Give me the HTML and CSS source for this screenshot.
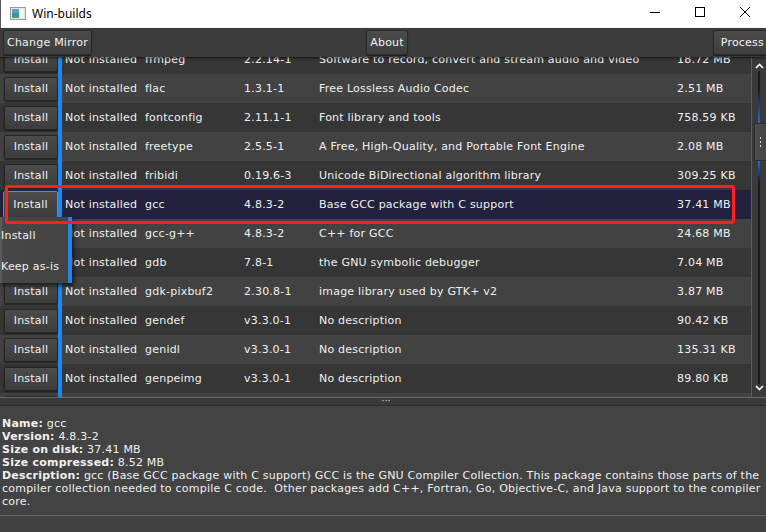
FILE: index.html
```html
<!DOCTYPE html>
<html>
<head>
<meta charset="utf-8">
<link rel="stylesheet" href="styles.css">
</head>
<body>
<div class="window">
  <header class="titlebar">
    <svg class="appicon" width="16" height="13" viewBox="0 0 16 13">
      <rect x="0.5" y="0.5" width="15" height="12" fill="#e8e8e8" stroke="#9a9a9a"/>
      <rect x="2" y="2" width="7" height="9" fill="#3f9a80"/>
      <rect x="2" y="2" width="7" height="4" fill="#5aa0c8"/>
      <rect x="10" y="2" width="4" height="9" fill="#f4f4f4"/>
    </svg>
    <span class="title">Win-builds</span>
    <div class="controls">
      <svg width="12" height="12" viewBox="0 0 12 12"><path d="M1 6.5h10" stroke="#000" stroke-width="1"/></svg>
      <svg width="12" height="12" viewBox="0 0 12 12"><rect x="1.5" y="1.5" width="9" height="9" fill="none" stroke="#000"/></svg>
      <svg width="12" height="12" viewBox="0 0 12 12"><path d="M1 1l10 10M11 1L1 11" stroke="#000" stroke-width="1"/></svg>
    </div>
  </header>
  <div class="app">
    <div class="toolbar">
      <button class="tbtn left">Change Mirror</button>
      <button class="tbtn mid">About</button>
      <button class="tbtn right">Process</button>
    </div>
    <div class="table-area">
      <div class="rows">
        <div class="row dark"><div class="cell-btn"><span class="ibtn">Install</span></div><div class="bar"></div><div class="c">Not installed</div><div class="c">ffmpeg</div><div class="c">2.2.14-1</div><div class="c">Software to record, convert and stream audio and video</div><div class="c">18.72 MB</div></div>
        <div class="row light"><div class="cell-btn"><span class="ibtn">Install</span></div><div class="bar"></div><div class="c">Not installed</div><div class="c">flac</div><div class="c">1.3.1-1</div><div class="c">Free Lossless Audio Codec</div><div class="c">2.51 MB</div></div>
        <div class="row dark"><div class="cell-btn"><span class="ibtn">Install</span></div><div class="bar"></div><div class="c">Not installed</div><div class="c">fontconfig</div><div class="c">2.11.1-1</div><div class="c">Font library and tools</div><div class="c">758.59 KB</div></div>
        <div class="row light"><div class="cell-btn"><span class="ibtn">Install</span></div><div class="bar"></div><div class="c">Not installed</div><div class="c">freetype</div><div class="c">2.5.5-1</div><div class="c">A Free, High-Quality, and Portable Font Engine</div><div class="c">2.08 MB</div></div>
        <div class="row dark"><div class="cell-btn"><span class="ibtn">Install</span></div><div class="bar"></div><div class="c">Not installed</div><div class="c">fribidi</div><div class="c">0.19.6-3</div><div class="c">Unicode BiDirectional algorithm library</div><div class="c">309.25 KB</div></div>
        <div class="row selected"><div class="cell-btn"><span class="ibtn focused">Install</span></div><div class="bar"></div><div class="c">Not installed</div><div class="c">gcc</div><div class="c">4.8.3-2</div><div class="c">Base GCC package with C support</div><div class="c">37.41 MB</div></div>
        <div class="row light"><div class="cell-btn"><span class="ibtn">Install</span></div><div class="bar"></div><div class="c">Not installed</div><div class="c">gcc-g++</div><div class="c">4.8.3-2</div><div class="c">C++ for GCC</div><div class="c">24.68 MB</div></div>
        <div class="row dark"><div class="cell-btn"><span class="ibtn">Install</span></div><div class="bar"></div><div class="c">Not installed</div><div class="c">gdb</div><div class="c">7.8-1</div><div class="c">the GNU symbolic debugger</div><div class="c">7.04 MB</div></div>
        <div class="row light"><div class="cell-btn"><span class="ibtn">Install</span></div><div class="bar"></div><div class="c">Not installed</div><div class="c">gdk-pixbuf2</div><div class="c">2.30.8-1</div><div class="c">image library used by GTK+ v2</div><div class="c">3.87 MB</div></div>
        <div class="row dark"><div class="cell-btn"><span class="ibtn">Install</span></div><div class="bar"></div><div class="c">Not installed</div><div class="c">gendef</div><div class="c">v3.3.0-1</div><div class="c">No description</div><div class="c">90.42 KB</div></div>
        <div class="row light"><div class="cell-btn"><span class="ibtn">Install</span></div><div class="bar"></div><div class="c">Not installed</div><div class="c">genidl</div><div class="c">v3.3.0-1</div><div class="c">No description</div><div class="c">135.31 KB</div></div>
        <div class="row dark"><div class="cell-btn"><span class="ibtn">Install</span></div><div class="bar"></div><div class="c">Not installed</div><div class="c">genpeimg</div><div class="c">v3.3.0-1</div><div class="c">No description</div><div class="c">89.80 KB</div></div>
        <div class="row light"><div class="cell-btn"><span class="ibtn">Install</span></div><div class="bar"></div><div class="c"></div><div class="c"></div><div class="c"></div><div class="c"></div><div class="c"></div></div>
      </div>
      <div class="scrollbar">
        <svg class="arrow" width="9" height="6" viewBox="0 0 9 6"><path d="M1 5l3.5-3.5L8 5" stroke="#fff" stroke-width="1.6" fill="none"/></svg>
        <div class="track upper"></div>
        <div class="thumb"><span></span><span></span><span></span></div>
        <div class="track lower"></div>
        <svg class="arrow" width="9" height="6" viewBox="0 0 9 6"><path d="M1 1l3.5 3.5L8 1" stroke="#fff" stroke-width="1.6" fill="none"/></svg>
      </div>
    </div>
    <div class="splitter"><span class="grip">&middot;&middot;&middot;</span></div>
    <div class="details">
      <div><b>Name:</b> gcc</div>
      <div><b>Version:</b> 4.8.3-2</div>
      <div><b>Size on disk:</b> 37.41 MB</div>
      <div><b>Size compressed:</b> 8.52 MB</div>
      <div><b>Description:</b> gcc (Base GCC package with C support) GCC is the GNU Compiler Collection. This package contains those parts of the compiler collection needed to compile C code.&nbsp; Other packages add C++, Fortran, Go, Objective-C, and Java support to the compiler core.</div>
    </div>
    <div class="status"></div>
  </div>

  <div class="dropdown">
    <div class="opt">Install</div>
    <div class="opt">Keep as-is</div>
  </div>
  <div class="highlight"></div>
</div>
</body>
</html>
```

FILE: styles.css
```css
* { box-sizing: border-box; }
html, body { margin: 0; padding: 0; }
body {
  width: 766px;
  height: 532px;
  overflow: hidden;
  background: #404040;
  font-family: "DejaVu Sans", Verdana, sans-serif;
  letter-spacing: 0.22px;
}
.window {
  position: relative;
  width: 766px;
  height: 532px;
  display: flex;
  flex-direction: column;
  overflow: hidden;
}
.titlebar {
  height: 28px;
  flex: none;
  background: #fff;
  display: flex;
  align-items: center;
  padding-left: 9px;
  border-left: 1px solid #5a5a5a;
  letter-spacing: 0;
}
.appicon { flex: none; margin-top: -2px; }
.title {
  font-family: "Noto Sans", "Liberation Sans", sans-serif;
  font-size: 12px;
  color: #000;
  margin-left: 6px;
  margin-top: -2px;
}
.controls {
  margin-left: auto;
  display: flex;
  gap: 33px;
  padding-right: 15px;
  margin-top: -4px;
}
.app {
  flex: 1;
  display: flex;
  flex-direction: column;
  background: #3e3e3e;
  min-height: 0;
}
.toolbar {
  height: 29px;
  flex: none;
  display: grid;
  grid-template-columns: 1fr auto 1fr;
  align-items: center;
  padding-left: 3px;
  background: #3b3b3b;
  box-shadow: 0 1px 2px rgba(0,0,0,.6);
  position: relative;
  z-index: 2;
}
.tbtn {
  height: 25px;
  font-family: "DejaVu Sans", sans-serif;
  font-size: 11px;
  letter-spacing: 0.22px;
  color: #f2f2f2;
  background: linear-gradient(#4a4a4a, #3f3f3f);
  border: 1px solid #2a2a2a;
  border-radius: 2px;
  padding: 0 3px;
  box-shadow: 0 1px 1px rgba(0,0,0,.5);
}
.tbtn.left { justify-self: start; }
.tbtn.mid { justify-self: center; margin-left: 5px; }
.tbtn.right { justify-self: end; margin-right: -2px; padding-left: 7px; }
.table-area {
  height: 341px;
  flex: none;
  display: flex;
  overflow: hidden;
  border-bottom: 1px solid #6a6a6a;
}
.rows {
  flex: 1;
  overflow: hidden;
  border-right: 1px solid #5c5c5c;
}
.row {
  height: 29px;
  display: grid;
  grid-template-columns: 58px 4px 80px 99px 75px 358px 1fr;
  align-items: center;
  font-size: 11px;
  color: #f0f0f0;
  white-space: nowrap;
}
.row:first-child { margin-top: -12px; }
.row.light { background: #424242; }
.row.dark { background: #363636; }
.row.selected { background: #22223e; }
.cell-btn { padding-left: 4px; height: 100%; display: flex; align-items: center; }
.ibtn {
  width: 54px;
  height: 24px;
  display: flex;
  align-items: center;
  justify-content: center;
  background: linear-gradient(#4b4b4b, #3c3c3c);
  border: 1px solid #262626;
  border-radius: 2px;
  box-shadow: 0 1px 2px rgba(0,0,0,.55);
  font-size: 11px;
  color: #f0f0f0;
}
.ibtn.focused {
  width: 57px;
  height: 27px;
  margin-left: -1px;
  border: 1px solid #5a8fc8;
}
.bar { height: 100%; background: #1e86f0; }
.c { padding-left: 3px; overflow: hidden; }
.scrollbar {
  width: 14px;
  flex: none;
  background: #3a3a3a;
  display: flex;
  flex-direction: column;
  align-items: center;
  padding: 5px 0 4px;
}
.arrow { flex: none; margin: 1px 0 2px; }
.track {
  width: 2px;
  background: #1a1a1a;
  flex: none;
}
.track.upper { height: 52px; background: linear-gradient(#1a1a1a 35%, #1f6fd6); }
.track.lower { flex: 1; background: linear-gradient(#1f6fd6, #1a1a1a 10%); }
.thumb {
  width: 13px;
  margin-left: 2px;
  height: 38px;
  flex: none;
  background: linear-gradient(90deg, #4e4e4e, #444);
  border: 1px solid #2c2c2c;
  border-radius: 2px 0 0 2px;
  display: flex;
  flex-direction: column;
  align-items: center;
  justify-content: center;
  gap: 2px;
}
.thumb span { width: 1px; height: 2px; background: #cfcfcf; }
.splitter {
  height: 8px;
  flex: none;
  background: #3a3a3a;
  display: flex;
  justify-content: center;
  border-bottom: 1px solid #2c2c2c;
}
.grip {
  font-size: 10px;
  line-height: 6px;
  color: #cfcfcf;
  letter-spacing: 0;
  margin-left: 6px;
}
.details {
  flex: 1;
  background: #434343;
  padding: 11px 0 0 2px;
  font-size: 11px;
  line-height: 13px;
  color: #f0f0f0;
  border-bottom: 1px solid #656565;
}
.details b { font-weight: bold; }
.status {
  height: 16px;
  flex: none;
  background: #414141;
}
.dropdown {
  position: absolute;
  left: 0;
  top: 217px;
  width: 72px;
  height: 66px;
  background: linear-gradient(90deg, #474747, #434343);
  border-left: 2px solid #5a5a5a;
  border-right: 4px solid #1e86f0;
  box-shadow: 2px 3px 4px rgba(0,0,0,.6);
  font-size: 11px;
  color: #f0f0f0;
  padding-top: 3px;
  z-index: 5;
}
.opt { height: 31px; line-height: 31px; margin-left: -1px; white-space: nowrap; }
.highlight {
  position: absolute;
  left: 5px;
  top: 185px;
  width: 730px;
  height: 39px;
  border: 3px solid #ff1f1f;
  border-radius: 3px;
  z-index: 6;
}
```
